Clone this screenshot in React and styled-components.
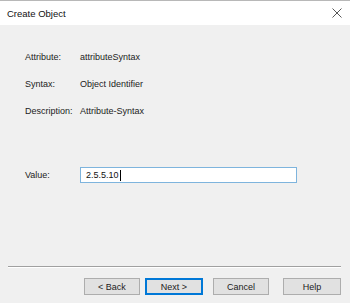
import styled, { createGlobalStyle } from "styled-components";

const Global = createGlobalStyle`
    html, body { margin:0; padding:0; background:#f0f0f0; }
    body { font-family:"Liberation Sans", Arial, sans-serif; }
`

const Dialog = styled.div`
    width:350px; height:303px;
    box-sizing:border-box;
    border-top:1px solid #b8b8b8;
    background-color:#f0f0f0;
    display:flex; flex-direction:column;
    overflow:hidden;
`
const TitleBar = styled.div`
    height:24px;
    background-color:#fff;
    display:flex; align-items:center; justify-content:space-between;
    padding:0 8px 0 7px;
    font-family:"Liberation Sans", Arial, sans-serif;
    font-size:9.5px;
    color:#111;
`
const Close = styled.svg`
    width:10px; height:10px;
`
const Body = styled.div`
    flex:1;
    display:flex; flex-direction:column;
    padding:18px 0 0 25px;
    font-size:9px;
    color:#222;
`
const Row = styled.div`
    display:grid;
    grid-template-columns:55px auto;
    align-items:center;
    height:27px;
`
const ValueRow = styled.div`
    display:grid;
    grid-template-columns:55px 217px;
    align-items:center;
    margin-top:${p => p.top}px;
`
const Input = styled.div`
    height:14px;
    border:1px solid #7eb4dd;
    background-color:#fff;
    display:flex; align-items:center;
    padding-left:5px;
    font-size:9px;
    color:#111;
`
const Caret = styled.span`
    display:inline-block;
    width:1px; height:11px;
    background:#000;
    margin-left:1px;
`
const Separator = styled.div`
    margin:0 9px 0 8px;
    height:1px;
    background-color:#a0a0a0;
    border-bottom:1px solid #fff;
`
const Buttons = styled.div`
    display:flex;
    padding:10px 0 8px 84px;
`
const Button = styled.button`
    box-sizing:border-box;
    width:${p => p.w || 56}px; height:17px;
    margin-left:${p => p.gap || 0}px;
    padding:0;
    background-color:#e1e1e1;
    border:1px solid ${p => p.primary ? "#0078d7" : "#adadad"};
    box-shadow:${p => p.primary ? "inset 0 0 0 1px #0078d7" : "none"};
    font-family:"Liberation Sans", Arial, sans-serif;
    font-size:9px;
    color:#222;
`

function App(){
    return(
        <>
            <Global />
            <Dialog>
                <TitleBar>
                    Create Object
                    <Close viewBox="0 0 10 10">
                        <path d="M0.5 0.5 L9.5 9.5 M9.5 0.5 L0.5 9.5" stroke="#444" strokeWidth="0.9" />
                    </Close>
                </TitleBar>
                <Body>
                    <Row><span>Attribute:</span><span>attributeSyntax</span></Row>
                    <Row><span>Syntax:</span><span>Object Identifier</span></Row>
                    <Row><span>Description:</span><span>Attribute-Syntax</span></Row>
                    <ValueRow top={43}>
                        <span>Value:</span>
                        <Input>2.5.5.10<Caret /></Input>
                    </ValueRow>
                </Body>
                <Separator />
                <Buttons>
                    <Button>&lt; Back</Button>
                    <Button primary w={58} gap={5}>Next &gt;</Button>
                    <Button gap={10}>Cancel</Button>
                    <Button w={58} gap={14}>Help</Button>
                </Buttons>
            </Dialog>
        </>
    )
}
export default App;
